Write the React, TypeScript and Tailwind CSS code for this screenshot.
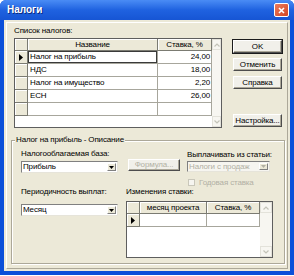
import React from "react";

function Tri() {
  return (
    <svg width="4" height="7" viewBox="0 0 4 7">
      <path d="M0 0L4 3.5L0 7Z" fill="#000" />
    </svg>
  );
}

function Down({ color = "#000" }: { color?: string }) {
  return (
    <svg width="5" height="3" viewBox="0 0 5 3">
      <path d="M0 0H5L2.5 3Z" fill={color} />
    </svg>
  );
}

function Chevron({ up }: { up?: boolean }) {
  return (
    <svg width="6" height="4" viewBox="0 0 6 4">
      <path d={up ? "M0.5 3.5L3 1L5.5 3.5" : "M0.5 0.5L3 3L5.5 0.5"} stroke="#c3c3b8" strokeWidth="1.2" fill="none" />
    </svg>
  );
}

function ScrollBtn({ up }: { up?: boolean }) {
  return (
    <div className="flex h-[11px] items-center justify-center border border-[#e3e2da] bg-[#f7f6f1]">
      <Chevron up={up} />
    </div>
  );
}

function HeadCell({ children, className = "" }: { children?: React.ReactNode; className?: string }) {
  return (
    <div
      className={`flex shrink-0 items-center justify-center border-r border-b border-[#7b7b72] bg-[#ECE9D8] shadow-[inset_1px_1px_0_#fff] ${className}`}
    >
      {children}
    </div>
  );
}

function Btn({ children, def, disabled, className = "" }: { children: React.ReactNode; def?: boolean; disabled?: boolean; className?: string }) {
  return (
    <div
      className={`flex items-center justify-center ${def ? "border border-[#1c1c1c]" : "border border-transparent"} ${className}`}
    >
      <div
        className={`flex h-full w-full items-center justify-center border-t border-l border-t-white border-l-white border-r border-b border-r-[#4d4d4d] border-b-[#4d4d4d] bg-[#F1F0EA] shadow-[inset_-1px_-1px_0_#aca899] ${disabled ? "text-[#b2b0a4]" : "text-black"}`}
      >
        {children}
      </div>
    </div>
  );
}

function Combo({ text, disabled, className = "" }: { text: string; disabled?: boolean; className?: string }) {
  return (
    <div className={`flex border border-t-[#808080] border-l-[#808080] border-r-[#e6e4da] border-b-[#e6e4da] ${disabled ? "bg-[#f6f5f0]" : "bg-white"} ${className}`}>
      <div className={`flex flex-1 items-center overflow-hidden pl-[1px] ${disabled ? "text-[#b2b0a4]" : "text-black"}`}>{text}</div>
      <div className="m-[1px] flex w-[9px] shrink-0 items-center justify-center border-t border-l border-t-white border-l-white border-r border-b border-r-[#808080] border-b-[#808080] bg-[#ECE9D8]">
        <Down color={disabled ? "#b2b0a4" : "#000"} />
      </div>
    </div>
  );
}

const rows = [
  ["Налог на прибыль", "24,00"],
  ["НДС", "18,00"],
  ["Налог на имущество", "2,20"],
  ["ЕСН", "26,00"],
];

export default function App() {
  return (
    <div className="h-[276px] w-[294px] whitespace-nowrap bg-white font-['Liberation_Sans',Arial,sans-serif] text-[8px] leading-[10px] tracking-[-0.15px] text-black">
      <div className="flex h-[275px] w-[294px] flex-col rounded-t-[6px] bg-[#0b4fd9]">
        {/* title bar */}
        <div className="flex h-[20px] shrink-0 items-center rounded-t-[6px] bg-gradient-to-b from-[#4a8cf5] via-[#1f62e0] to-[#1655d4] pl-[7px]">
          <span className="text-[10px] leading-[12px] font-bold tracking-normal text-white [text-shadow:1px_1px_0_#0a2a80]">Налоги</span>
          <div className="ml-auto mr-[5px] flex h-[14px] w-[15px] items-center justify-center rounded-[2px] border border-white bg-gradient-to-br from-[#eb7a5c] to-[#d3441f]">
            <svg width="7" height="7" viewBox="0 0 7 7">
              <path d="M1 1L6 6M6 1L1 6" stroke="#fff" strokeWidth="1.6" />
            </svg>
          </div>
        </div>
        {/* body */}
        <div className="mx-[4px] mb-[4px] flex flex-1 bg-[#ECE9D8] p-[2px]">
          <div className="flex flex-1 flex-col border border-t-white border-l-white border-r-[#aca899] border-b-[#aca899]">
            <div className="ml-[7px] mt-[3px] h-[10px]">Список налогов:</div>
            <div className="mt-[2px] ml-[7px] flex">
              {/* grid 1 */}
              <div className="flex h-[90px] w-[208px] border border-[#5e5e5e] bg-white">
                <div className="flex w-[197px] flex-col">
                  <div className="flex h-[12px]">
                    <HeadCell className="w-[13px]" />
                    <HeadCell className="w-[130px]">Название</HeadCell>
                    <HeadCell className="w-[54px]">Ставка, %</HeadCell>
                  </div>
                  {[...rows, ["", ""]].map((r, i) => (
                    <div key={i} className="flex h-[13px]">
                      <HeadCell className="w-[13px]">{i === 0 ? <Tri /> : null}</HeadCell>
                      <div
                        className={`flex w-[130px] items-center border-r border-b border-[#a7a69c] pl-[2px] ${i === 0 ? "shadow-[inset_0_0_0_1px_#3a3a3a]" : ""}`}
                      >
                        {r[0]}
                      </div>
                      <div className="flex w-[54px] items-center justify-end border-r border-b border-[#a7a69c] pr-[1px]">{r[1]}</div>
                    </div>
                  ))}
                </div>
                <div className="flex w-[9px] flex-col justify-between bg-[#f7f6f1]">
                  <ScrollBtn up />
                  <ScrollBtn />
                </div>
              </div>
              {/* buttons */}
              <div className="ml-[10px] flex w-[51px] flex-col pt-[1px]">
                <Btn def className="h-[15px]">OK</Btn>
                <Btn className="mt-[3px] h-[15px]">Отменить</Btn>
                <Btn className="mt-[3px] h-[15px]">Справка</Btn>
                <Btn className="mt-[23px] h-[15px]">Настройка...</Btn>
              </div>
            </div>
            {/* group box */}
            <div className="relative ml-[4px] mt-[12px] h-[124px] w-[274px] border border-[#aca899] shadow-[inset_1px_1px_0_#fff,1px_1px_0_#fff]">
              <div className="absolute -top-[6px] left-[3px] bg-[#ECE9D8] px-[1px]">Налог на прибыль - Описание</div>
              <div className="flex pl-[9px]">
                <div className="w-[97px] pt-[8px]">
                  <div className="h-[10px]">Налогооблагаемая база:</div>
                  <Combo text="Прибыль" className="mt-[2px] h-[12px]" />
                </div>
                <Btn disabled className="ml-[9px] mt-[17px] h-[14px] w-[54px]">Формула...</Btn>
                <div className="ml-[6px] w-[83px] pt-[9px]">
                  <div className="h-[10px]">Выплачивать из статьи:</div>
                  <Combo text="Налоги с продаж" disabled className="mt-[1px] h-[11px]" />
                  <div className="mt-[6px] flex h-[9px] items-center pl-[1px] text-[#b2b0a4]">
                    <div className="h-[7px] w-[7px] border border-[#c9c7ba] bg-[#f6f5f0]" />
                    <span className="ml-[4px]">Годовая ставка</span>
                  </div>
                </div>
              </div>
              <div className="flex pl-[9px]">
                <div className="w-[97px]">
                  <div className="h-[10px]">Периодичность выплат:</div>
                  <Combo text="Месяц" className="mt-[7px] h-[12px]" />
                </div>
                <div className="ml-[8px]">
                  <div className="h-[10px]">Изменения ставки:</div>
                  <div className="mt-[4px] flex h-[57px] w-[147px] border border-[#5e5e5e] bg-white">
                    <div className="flex w-[133px] flex-col">
                      <div className="flex h-[12px]">
                        <HeadCell className="w-[13px]" />
                        <HeadCell className="w-[67px]">месяц проекта</HeadCell>
                        <HeadCell className="w-[53px]">Ставка, %</HeadCell>
                      </div>
                      <div className="flex h-[13px]">
                        <HeadCell className="w-[13px]">
                          <Tri />
                        </HeadCell>
                        <div className="w-[67px] border-r border-b border-[#a7a69c]" />
                        <div className="w-[53px] border-r border-b border-[#a7a69c]" />
                      </div>
                    </div>
                    <div className="flex w-[12px] flex-col justify-between bg-[#f7f6f1]">
                      <ScrollBtn up />
                      <ScrollBtn />
                    </div>
                  </div>
                </div>
              </div>
            </div>
          </div>
        </div>
      </div>
    </div>
  );
}
